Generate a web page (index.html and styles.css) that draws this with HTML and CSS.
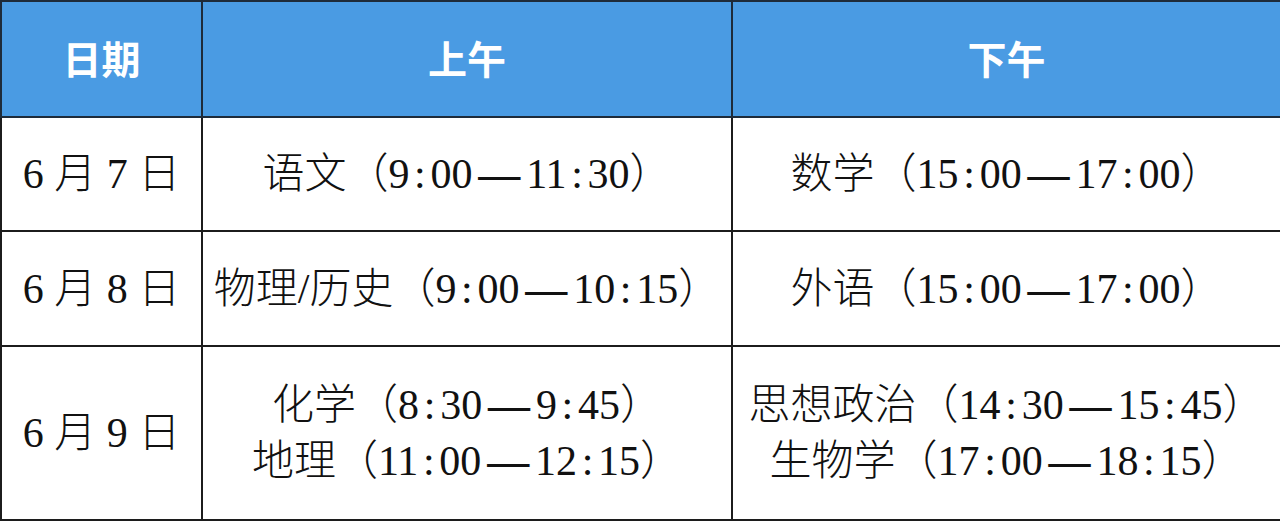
FILE: index.html
```html
<!DOCTYPE html>
<html lang="zh-CN">
<head>
<meta charset="utf-8">
<link rel="stylesheet" href="styles.css">
</head>
<body>
<table class="schedule">
  <colgroup>
    <col class="c-date">
    <col class="c-am">
    <col class="c-pm">
  </colgroup>
  <thead>
    <tr class="head">
      <th>日期</th>
      <th>上午</th>
      <th>下午</th>
    </tr>
  </thead>
  <tbody>
    <tr class="r1">
      <td>6 月 7 日</td>
      <td>语文（9<span class="co">:</span>00<span class="dash">—</span>11<span class="co">:</span>30）</td>
      <td>数学（15<span class="co">:</span>00<span class="dash">—</span>17<span class="co">:</span>00）</td>
    </tr>
    <tr class="r2">
      <td>6 月 8 日</td>
      <td>物理/历史（9<span class="co">:</span>00<span class="dash">—</span>10<span class="co">:</span>15）</td>
      <td>外语（15<span class="co">:</span>00<span class="dash">—</span>17<span class="co">:</span>00）</td>
    </tr>
    <tr class="r3">
      <td>6 月 9 日</td>
      <td>化学（8<span class="co">:</span>30<span class="dash">—</span>9<span class="co">:</span>45）<br>地理（11<span class="co">:</span>00<span class="dash">—</span>12<span class="co">:</span>15）</td>
      <td>思想政治（14<span class="co">:</span>30<span class="dash">—</span>15<span class="co">:</span>45）<br>生物学（17<span class="co">:</span>00<span class="dash">—</span>18<span class="co">:</span>15）</td>
    </tr>
  </tbody>
</table>
</body>
</html>
```

FILE: styles.css
```css
html, body {
  margin: 0;
  padding: 0;
  background: #ffffff;
}

.schedule {
  width: 1280px;
  height: 521px;
  border-collapse: collapse;
  table-layout: fixed;
  font-family: "Liberation Serif", "Noto Sans CJK SC", serif;
  color: #111111;
}

.c-date { width: 201px; }
.c-am { width: 530px; }
.c-pm { width: 549px; }

.schedule th,
.schedule td {
  border: 2px solid #1c1c1c;
  padding: 0;
  text-align: center;
  vertical-align: middle;
}

.head th {
  height: 110px;
  background: #4a9be3;
  color: #ffffff;
  font-family: "Noto Sans CJK SC", sans-serif;
  font-weight: 700;
  font-size: 39px;
  border-color: #1e2b3a;
  padding-bottom: 4px;
}

.schedule td {
  font-size: 42px;
  font-weight: 300;
  line-height: 56px;
}

.r1 td { height: 112px; }
.r2 td { height: 113px; }
.r3 td { height: 172px; }

.co {
  display: inline-block;
  width: 0.5em;
  text-align: center;
}

.dash {
  display: inline-block;
  padding: 0 0.14em;
  font-weight: 700;
}
```
